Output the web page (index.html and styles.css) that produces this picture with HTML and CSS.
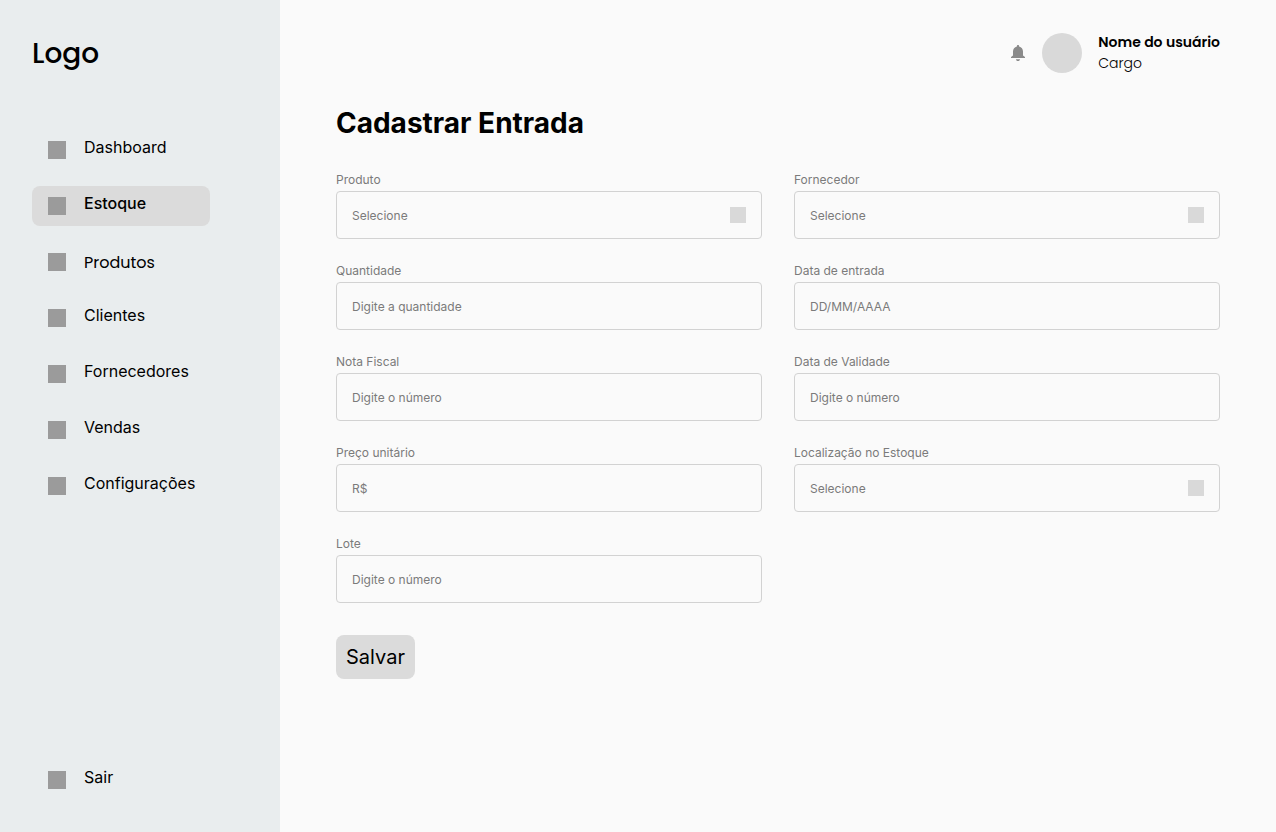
FILE: index.html
```html
<!DOCTYPE html>
<html lang="pt-BR">
<head>
<meta charset="utf-8">
<meta name="viewport" content="width=device-width, initial-scale=1">
<title>Cadastrar Entrada</title>
<link rel="stylesheet" href="styles.css">
</head>
<body>
<div class="app">
  <aside class="sidebar">
    <div class="logo">Logo</div>
    <nav class="menu" aria-label="Principal">
      <a class="menu-item" href="#"><span class="menu-icon"></span><span class="menu-label">Dashboard</span></a>
      <a class="menu-item active" href="#" aria-current="page"><span class="menu-icon"></span><span class="menu-label">Estoque</span></a>
      <a class="menu-item products" href="#"><span class="menu-icon"></span><span class="menu-label">Produtos</span></a>
      <a class="menu-item" href="#"><span class="menu-icon"></span><span class="menu-label">Clientes</span></a>
      <a class="menu-item" href="#"><span class="menu-icon"></span><span class="menu-label">Fornecedores</span></a>
      <a class="menu-item" href="#"><span class="menu-icon"></span><span class="menu-label">Vendas</span></a>
      <a class="menu-item" href="#"><span class="menu-icon"></span><span class="menu-label">Configurações</span></a>
    </nav>
    <a class="menu-item logout" href="#"><span class="menu-icon"></span><span class="menu-label">Sair</span></a>
  </aside>
  <main class="content">
    <header class="topbar">
      <button class="bell" type="button" aria-label="Notificações">
        <svg width="14" height="16" viewBox="0 0 14 16" fill="#8a8a8a" aria-hidden="true">
          <path d="M7 0C6.3 0 5.9.5 5.9 1.1V1.5C3.500 2 2 4 2 6.500V10.500L0 12V13H14V12L12 10.500V6.500C12 4 10.500 2 8.100 1.500V1.100C8.100.5 7.700 0 7 0ZM5 14.200H9C9 15.200 8.200 16 7 16S5 15.200 5 14.200Z"/>
        </svg>
      </button>
      <span class="avatar"></span>
      <div class="user">
        <span class="user-name">Nome do usuário</span>
        <span class="user-role">Cargo</span>
      </div>
    </header>
    <h1 class="title">Cadastrar Entrada</h1>
    <form class="form">
      <div class="field">
        <label for="produto">Produto</label>
        <select class="control select" id="produto"><option>Selecione</option></select>
      </div>
      <div class="field">
        <label for="fornecedor">Fornecedor</label>
        <select class="control select" id="fornecedor"><option>Selecione</option></select>
      </div>
      <div class="field">
        <label for="quantidade">Quantidade</label>
        <input class="control" id="quantidade" type="text" placeholder="Digite a quantidade">
      </div>
      <div class="field">
        <label for="entrada">Data de entrada</label>
        <input class="control" id="entrada" type="text" placeholder="DD/MM/AAAA">
      </div>
      <div class="field">
        <label for="nota">Nota Fiscal</label>
        <input class="control" id="nota" type="text" placeholder="Digite o número">
      </div>
      <div class="field">
        <label for="validade">Data de Validade</label>
        <input class="control" id="validade" type="text" placeholder="Digite o número">
      </div>
      <div class="field">
        <label for="preco">Preço unitário</label>
        <input class="control" id="preco" type="text" placeholder="R$">
      </div>
      <div class="field">
        <label for="local">Localização no Estoque</label>
        <select class="control select" id="local"><option>Selecione</option></select>
      </div>
      <div class="field">
        <label for="lote">Lote</label>
        <input class="control" id="lote" type="text" placeholder="Digite o número">
      </div>
      <div class="actions">
        <button class="save" type="submit">Salvar</button>
      </div>
    </form>
  </main>
</div>
</body>
</html>
```
FILE: styles.css
```css
* {
  box-sizing: border-box;
}

body {
  margin: 0;
  background: #fafafa;
  color: #000;
  font-family: Inter, "Liberation Sans", sans-serif;
}

.app {
  display: flex;
  min-height: 100vh;
}

.sidebar {
  display: flex;
  flex: 0 0 280px;
  flex-direction: column;
  padding: 32px;
  background: #e9edee;
}

.logo {
  margin-bottom: 54px;
  font-family: Poppins, Inter, sans-serif;
  font-size: 28px;
  font-weight: 500;
  line-height: 44px;
}

.menu {
  display: flex;
  flex-direction: column;
  gap: 16px;
}

.menu-item {
  display: flex;
  align-items: flex-start;
  gap: 18px;
  width: 178px;
  height: 40px;
  padding: 8px 16px;
  border-radius: 8px;
  color: #000;
  font-size: 16px;
  line-height: 19px;
  text-decoration: none;
}

.menu-item.active {
  background: #dbdbdb;
  font-weight: 500;
}

.menu-item.products {
  font-family: Poppins, Inter, sans-serif;
  line-height: 26px;
}

.menu-icon {
  flex: none;
  width: 18px;
  height: 18px;
  margin-top: 3px;
  background: #9b9b9b;
}

.logout {
  margin-top: auto;
}

.content {
  flex: 1;
  min-width: 0;
  padding: 32px 56px;
}

.topbar {
  display: flex;
  align-items: center;
  justify-content: flex-end;
  gap: 16px;
}

.bell {
  display: flex;
  padding: 0 1px;
  border: 0;
  background: none;
}

.avatar {
  width: 40px;
  height: 40px;
  border-radius: 50%;
  background: #d9d9d9;
}

.user {
  display: flex;
  flex-direction: column;
  font-family: Poppins, Inter, sans-serif;
  font-size: 14px;
  line-height: 21px;
}

.user-name {
  font-weight: 600;
}

.user-role {
  font-weight: 300;
}

.title {
  margin: 32px 0;
  font-size: 28px;
  font-weight: 700;
  line-height: 34px;
}

.form {
  display: grid;
  grid-template-columns: 1fr 1fr;
  gap: 24px 32px;
}

.field {
  display: flex;
  flex-direction: column;
  gap: 4px;
  min-width: 0;
  color: #7b7b7b;
  font-size: 12px;
  line-height: 15px;
}

.control {
  width: 100%;
  height: 48px;
  padding: 0 15px;
  border: 1px solid #d2d2d2;
  border-radius: 4px;
  background: transparent;
  color: #7b7b7b;
  font: inherit;
}

.control::placeholder {
  color: #7b7b7b;
  opacity: 1;
}

.select {
  appearance: none;
  background: linear-gradient(#d9d9d9, #d9d9d9) no-repeat right 15px center / 16px 16px;
}

.actions {
  grid-column: 1 / -1;
  padding-top: 8px;
}

.save {
  padding: 10px;
  border: 0;
  border-radius: 8px;
  background: #dbdbdb;
  color: #000;
  font-family: inherit;
  font-size: 20px;
  line-height: 24px;
}
```
